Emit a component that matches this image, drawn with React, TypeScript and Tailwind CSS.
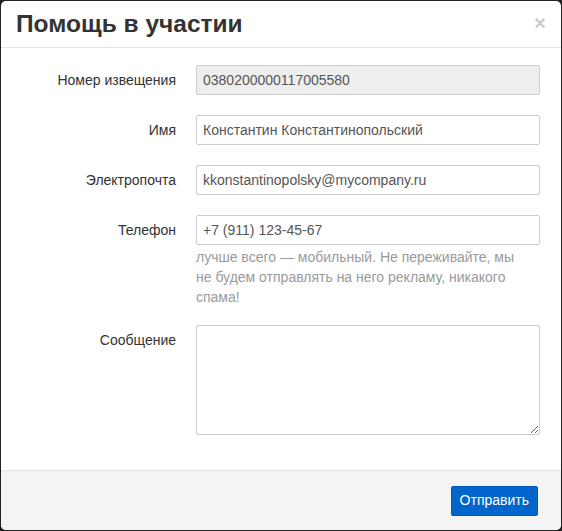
import React from "react";

const FIELD =
  "h-[30px] w-full rounded-[2px] border border-[#ccc] px-[6px] text-[14px] text-[#555] outline-none";

function Row({
  label,
  children,
  className = "",
}: {
  label: string;
  children: React.ReactNode;
  className?: string;
}) {
  return (
    <div className={`flex items-start ${className}`}>
      <label className="w-[195px] shrink-0 pt-[5px] pr-[20px] text-right text-[14px] leading-[20px] text-[#333]">
        {label}
      </label>
      <div className="min-w-0 flex-1">{children}</div>
    </div>
  );
}

export default function App() {
  return (
    <div className="h-[531px] w-[562px] bg-[#222] pl-px pt-px font-['Liberation_Sans',Arial,sans-serif]">
      <div className="flex h-[529px] w-[560px] flex-col overflow-hidden rounded-[5px] bg-white">
        {/* Header */}
        <div className="flex h-[47px] shrink-0 items-center justify-between border-b border-[#e5e5e5] pl-[15px] pr-[15px]">
          <h1 className="text-[24.5px] font-bold leading-none text-[#333]">Помощь в участии</h1>
          <button type="button" className="-mt-[3px] text-[20px] font-bold leading-none text-[#ccc]">
            ×
          </button>
        </div>

        {/* Body */}
        <div className="flex flex-1 flex-col gap-[20px] pr-[21px] pt-[17px]">
          <Row label="Номер извещения">
            <input
              className={`${FIELD} bg-[#eee]`}
              readOnly
              defaultValue="0380200000117005580"
            />
          </Row>
          <Row label="Имя">
            <input className={FIELD} defaultValue="Константин Константинопольский" />
          </Row>
          <Row label="Электропочта">
            <input className={FIELD} defaultValue="kkonstantinopolsky@mycompany.ru" />
          </Row>
          <Row label="Телефон">
            <input className={FIELD} defaultValue="+7 (911) 123-45-67" />
            <p className="mt-[2px] w-[325px] text-[14px] leading-[20px] text-[#9a9a9a]">
              лучше всего — мобильный. Не переживайте, мы не будем отправлять на него рекламу,
              никакого спама!
            </p>
          </Row>
          <Row label="Сообщение" className="-mt-[2px]">
            <textarea className="block h-[110px] w-full rounded-[2px] border border-[#ccc] px-[6px] py-[6px] text-[14px] text-[#555] outline-none" />
          </Row>
        </div>

        {/* Footer */}
        <div className="flex h-[60px] shrink-0 items-center justify-end border-t border-[#e5e5e5] bg-[#f4f4f4] pr-[23px]">
          <button
            type="button"
            className="h-[30px] rounded-[2px] border border-[#0059b3] bg-[#0066cc] px-[8px] text-[14px] text-white"
          >
            Отправить
          </button>
        </div>
      </div>
    </div>
  );
}
